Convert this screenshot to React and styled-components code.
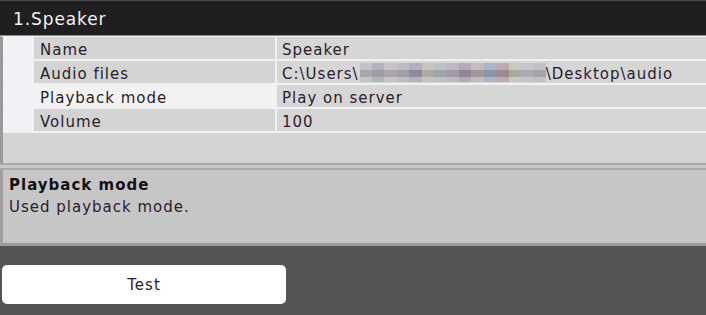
import React from 'react';
import styled, { createGlobalStyle } from 'styled-components';

const Global = createGlobalStyle`
  html, body { margin: 0; padding: 0; background: #555555; }
  body { font-family: "DejaVu Sans", Verdana, sans-serif; }
`;

const rows = [
  { name: 'Name', value: 'Speaker' },
  { name: 'Audio files', value: 'path' },
  { name: 'Playback mode', value: 'Play on server', selected: true },
  { name: 'Volume', value: '100' },
];

// pixelated stand-in for the hidden user name
const blur = [
  ['#c4c4c8', '#a6a6ac'], ['#b2b2b8', '#9c9ca8'], ['#c8c2c6', '#aca6ac'], ['#bcbcc0', '#a0a0a6'],
  ['#b6b0bc', '#8e8a9c'], ['#cac2bc', '#b0a8a2'], ['#b8c4c4', '#98a8a8'], ['#c0b8c0', '#a49aa4'],
  ['#b4aab6', '#928696'], ['#c4bac0', '#a2969e'], ['#aab4c2', '#8a96a8'], ['#bcaab2', '#9a8a94'],
  ['#c8c8bc', '#a8a89c'], ['#c6c6ca', '#acacb2'], ['#c2c2c6', '#a4a4aa'],
];

function App() {
  return (
    <>
      <Global />
      <Page>
        <Panel>
          <Header>1.Speaker</Header>
          <Grid>
            {rows.map((r) => (
              <Row key={r.name}>
                <Margin />
                <NameCell $selected={r.selected}>{r.name}</NameCell>
                <ValueCell>
                  {r.value === 'path' ? (
                    <>
                      C:\Users\
                      <Blur>
                        {blur.map(([top, mid], i) => (
                          <span key={i} style={{ background: `linear-gradient(${top} 0 35%, ${mid} 35% 75%, ${top} 75%)` }} />
                        ))}
                      </Blur>
                      \Desktop\audio
                    </>
                  ) : r.value}
                </ValueCell>
              </Row>
            ))}
            <Filler />
          </Grid>
          <Splitter />
          <Description>
            <DescTitle>Playback mode</DescTitle>
            <DescText>Used playback mode.</DescText>
          </Description>
        </Panel>
        <Actions>
          <Button>Test</Button>
        </Actions>
      </Page>
    </>
  );
}

const Page = styled.div`
  width: 706px;
  height: 315px;
  background: #555555;
  display: flex;
  flex-direction: column;
`;

const Panel = styled.div`
  display: flex;
  flex-direction: column;
  background: #d4d4d4;
  border-bottom: 3px solid #9c9c9c;
`;

const Header = styled.div`
  height: 36px;
  box-sizing: border-box;
  background: #1f1f1f;
  border-top: 1px solid #4a4a4a;
  border-bottom: 1px solid #8a8a8a;
  color: #f4f4f4;
  font-size: 17px;
  letter-spacing: 0.9px;
  line-height: 20px;
  padding: 8px 0 0 13px;
`;

const Grid = styled.div`
  display: flex;
  flex-direction: column;
  border-left: 3px solid #9a9a9a;
  border-top: 1px solid #f2f2f2;
`;

const Row = styled.div`
  display: grid;
  grid-template-columns: 31px 243px 1fr;
  height: 24px;
  border-bottom: 2px solid #f0f0f0;
  box-sizing: border-box;
  font-size: 15px;
  letter-spacing: 1px;
  line-height: 17px;
  color: #2b1c2b;
`;

const Margin = styled.div`
  background: #f0f2f5;
`;

const NameCell = styled.div`
  background: ${(p) => (p.$selected ? '#f2f2f3' : '#d4d4d4')};
  border-right: 2px solid #f0f0f0;
  padding: 5px 0 0 6px;
  white-space: nowrap;
`;

const ValueCell = styled.div`
  display: flex;
  align-items: flex-start;
  padding: 5px 0 0 5px;
  white-space: nowrap;
  background: #d6d6d6;
`;

const Blur = styled.span`
  display: inline-flex;
  margin: -3px 0 0 1px;
  width: 186px;
  height: 19px;
  span { flex: 1; height: 19px; }
`;

const Filler = styled.div`
  height: 30px;
  background: #d4d4d4;
`;

const Splitter = styled.div`
  height: 3px;
  background: #c8c8c8;
  border-top: 2px solid #a6a6a6;
  border-bottom: 2px solid #acacac;
`;

const Description = styled.div`
  background: #c6c6c6;
  border-left: 3px solid #a0a0a0;
  height: 73px;
  padding: 4px 0 0 6px;
  box-sizing: border-box;
  font-size: 15px;
  letter-spacing: 1px;
  line-height: 22px;
  color: #2b1c2b;
`;

const DescTitle = styled.div`
  font-weight: bold;
  color: #141014;
`;

const DescText = styled.div``;

const Actions = styled.div`
  padding: 19px 0 0 2px;
`;

const Button = styled.button`
  width: 284px;
  height: 39px;
  background: #fff;
  border: none;
  border-radius: 5px;
  font-family: "DejaVu Sans", Verdana, sans-serif;
  font-size: 15px;
  letter-spacing: 1px;
  color: #2b1c2b;
  padding: 0;
`;

export default App;
